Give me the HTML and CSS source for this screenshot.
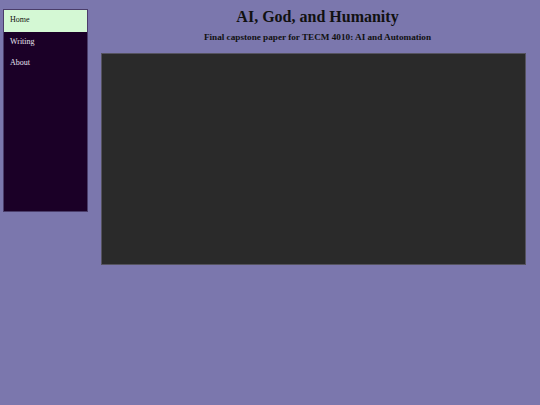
FILE: index.html
```html
<!DOCTYPE html>
<html>
<head>
<meta charset="utf-8">
<link rel="stylesheet" href="styles.css">
</head>
<body>
<div class="page">
  <nav class="sidebar">
    <a class="nav-item active" href="#">Home</a>
    <a class="nav-item" href="#">Writing</a>
    <a class="nav-item" href="#">About</a>
  </nav>
  <main class="main">
    <h1 class="title">AI, God, and Humanity</h1>
    <h2 class="subtitle">Final capstone paper for TECM 4010: AI and Automation</h2>
    <div class="viewer"></div>
  </main>
</div>
</body>
</html>
```
FILE: styles.css
```css
html, body {
  margin: 0;
  padding: 0;
  background: #7b77ad;
  font-family: "Liberation Serif", "DejaVu Serif", serif;
}
.page {
  display: flex;
  align-items: flex-start;
  height: 405px;
}
.sidebar {
  margin: 9px 7px 0 3px;
  width: 83px;
  height: 201px;
  background: #1b0027;
  border: 1px solid #4a3d6a;
  display: flex;
  flex-direction: column;
  flex-shrink: 0;
}
.nav-item {
  display: block;
  height: 21.5px;
  line-height: 19px;
  padding-left: 6px;
  font-size: 8px;
  color: #e6e0ee;
  text-decoration: none;
}
.nav-item.active {
  background: #d4f8d4;
  color: #111;
}
.main {
  flex: 1;
  display: flex;
  flex-direction: column;
  align-items: center;
  padding: 0;
}
.title {
  margin: 7px 0 0;
  font-size: 16px;
  font-weight: bold;
  color: #111;
  line-height: 20px;
}
.subtitle {
  margin: 4px 0 0;
  font-size: 9.2px;
  font-weight: bold;
  color: #111;
  line-height: 12px;
}
.viewer {
  margin: 10px 14px 0 6px;
  align-self: stretch;
  height: 210px;
  background: #2a2a2a;
  border: 1px solid #55535f;
}
```
